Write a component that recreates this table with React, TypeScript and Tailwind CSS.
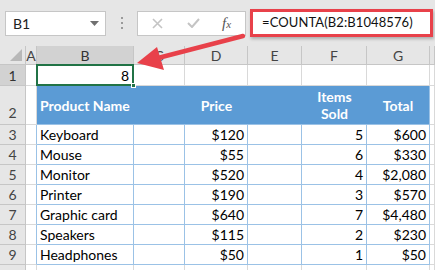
import React from "react";

const rows = [
  { n: 3, name: "Keyboard", price: "$120", sold: "5", total: "$600" },
  { n: 4, name: "Mouse", price: "$55", sold: "6", total: "$330" },
  { n: 5, name: "Monitor", price: "$520", sold: "4", total: "$2,080" },
  { n: 6, name: "Printer", price: "$190", sold: "3", total: "$570" },
  { n: 7, name: "Graphic card", price: "$640", sold: "7", total: "$4,480" },
  { n: 8, name: "Speakers", price: "$115", sold: "2", total: "$230" },
  { n: 9, name: "Headphones", price: "$50", sold: "1", total: "$50" },
];

const colHeads = ["A", "B", "C", "D", "E", "F", "G", ""];

const rowHead = "flex items-center justify-center bg-[#e6e6e6] border-r border-b border-[#c6c6c6] text-[#444] text-[14px]";
const grayCell = "border-r border-b border-[#d9d9d9] bg-white";
const blueCell = "border-r border-b border-[#9bc2e6] bg-white flex items-center whitespace-nowrap";

const Toolbar = () => (
  <div className="flex items-center h-[46px] bg-[#e6e6e6] pl-[5px]">
    <div className="w-[101px] h-[25px] bg-white border border-[#c6c6c6] flex items-center justify-between pl-[7px] pr-[6px]">
      <span className="text-[14px] text-[#222]">B1</span>
      <svg width="9" height="5" viewBox="0 0 9 5">
        <path d="M0 0 L9 0 L4.5 5 Z" fill="#707070" />
      </svg>
    </div>
    <div className="w-[31px] flex flex-col items-center gap-[3px]">
      <span className="w-[2px] h-[2px] bg-[#9a9a9a]" />
      <span className="w-[2px] h-[2px] bg-[#9a9a9a]" />
      <span className="w-[2px] h-[2px] bg-[#9a9a9a]" />
    </div>
    <div className="w-[109px] h-[25px] bg-white border border-[#c6c6c6] flex items-center">
      <svg className="ml-[14px]" width="11" height="11" viewBox="0 0 11 11">
        <path d="M1 1 L10 10 M10 1 L1 10" stroke="#c4c4c4" strokeWidth="1.6" />
      </svg>
      <svg className="ml-[24px]" width="13" height="10" viewBox="0 0 13 10">
        <path d="M1 5 L5 9 L12 1" stroke="#c4c4c4" strokeWidth="2" fill="none" />
      </svg>
      <span className="ml-[22px] italic text-[15px] text-[#555] font-['Liberation_Serif',serif]">
        f<span className="text-[11px]">x</span>
      </span>
    </div>
    <div className="ml-[4px] w-[183px] h-[28px] bg-white border-[3px] border-[#e8414a] shadow-[1px_2px_3px_rgba(0,0,0,0.25)] flex items-center pl-[9px] overflow-hidden">
      <span className="text-[13px] tracking-[0.1px] text-[#111] whitespace-nowrap">=COUNTA(B2:B1048576)</span>
    </div>
  </div>
);

export default function App() {
  return (
    <div className="relative w-[435px] h-[270px] overflow-hidden bg-white font-['Lato',sans-serif]">
      <Toolbar />
      <div className="grid grid-cols-[26px_11px_97px_51px_63px_54px_65px_63px_1fr] grid-rows-[19px_21px_39px_repeat(8,20px)]">
        {/* column headers */}
        <div className="relative bg-[#e6e6e6] border-r border-b border-[#c6c6c6]">
          <svg className="absolute right-[3px] bottom-[3px]" width="12" height="12" viewBox="0 0 12 12">
            <path d="M12 0 L12 12 L0 12 Z" fill="#b8b8b8" />
          </svg>
        </div>
        {colHeads.map((c, i) => (
          <div
            key={i}
            className={
              c === "B"
                ? "flex items-center justify-center bg-[#d2d2d2] border-r border-b border-[#c6c6c6] text-[#333] text-[14px]"
                : "flex items-center justify-center bg-[#e6e6e6] border-r border-b border-[#c6c6c6] text-[#444] text-[14px]"
            }
          >
            {c}
          </div>
        ))}

        {/* row 1 */}
        <div className="flex items-center justify-center bg-[#d2d2d2] border-r border-b border-[#c6c6c6] text-[#333] text-[14px]">1</div>
        <div className={grayCell} />
        <div className="relative border-r border-b border-[#d9d9d9] bg-white flex items-center justify-end pr-[4px] text-[14px] text-black">
          8
          <div className="absolute -left-[1px] -top-[1px] -right-[1px] -bottom-[1px] border-2 border-[#217346]" />
          <div className="absolute -right-[3px] -bottom-[3px] w-[5px] h-[5px] bg-[#217346] border border-white" />
        </div>
        {[0, 1, 2, 3, 4, 5].map((i) => (
          <div key={i} className={grayCell} />
        ))}

        {/* row 2 : table header */}
        <div className="flex items-end justify-center pb-[1px] bg-[#e6e6e6] border-r border-b border-[#c6c6c6] text-[#444] text-[14px]">2</div>
        <div className="border-r border-b border-[#d9d9d9] bg-white" />
        <div className="bg-[#5b9bd5] border-b border-[#9bc2e6] flex items-center pl-[3px] text-white font-bold text-[14px] whitespace-nowrap">Product Name</div>
        <div className="bg-[#5b9bd5] border-b border-[#9bc2e6]" />
        <div className="bg-[#5b9bd5] border-b border-[#9bc2e6] flex items-center justify-center text-white font-bold text-[14px]">Price</div>
        <div className="bg-[#5b9bd5] border-b border-[#9bc2e6]" />
        <div className="bg-[#5b9bd5] border-b border-[#9bc2e6] flex flex-col items-center justify-center leading-[17px] text-white font-bold text-[14px]">
          <span>Items</span>
          <span>Sold</span>
        </div>
        <div className="bg-[#5b9bd5] border-r border-b border-[#9bc2e6] flex items-center justify-center text-white font-bold text-[14px]">Total</div>
        <div className={grayCell} />

        {/* data rows */}
        {rows.map((r) => (
          <React.Fragment key={r.n}>
            <div className={rowHead}>{r.n}</div>
            <div className="border-r border-b border-r-[#9bc2e6] border-b-[#d9d9d9] bg-white" />
            <div className={blueCell + " pl-[3px] text-[14px] text-black"}>{r.name}</div>
            <div className={blueCell} />
            <div className={blueCell + " justify-end pr-[3px] text-[14px] text-black"}>{r.price}</div>
            <div className={blueCell} />
            <div className={blueCell + " justify-end pr-[3px] text-[14px] text-black"}>{r.sold}</div>
            <div className={blueCell + " justify-end pr-[3px] text-[14px] text-black"}>{r.total}</div>
            <div className={grayCell} />
          </React.Fragment>
        ))}

        {/* row 10, only its top edge shows */}
        <div className="bg-[#e6e6e6] border-r border-b border-[#c6c6c6]" />
        {[0, 1, 2, 3, 4, 5, 6, 7].map((i) => (
          <div key={i} className={grayCell} />
        ))}
      </div>

      {/* annotation arrow */}
      <svg className="absolute left-0 top-0 pointer-events-none" width="435" height="270" viewBox="0 0 435 270">
        <line x1="243" y1="36" x2="158" y2="58" stroke="#e8414a" strokeWidth="4.5" strokeLinecap="round" />
        <path d="M137 63 L157 47 L164 70 Z" fill="#e8414a" />
      </svg>
    </div>
  );
}
